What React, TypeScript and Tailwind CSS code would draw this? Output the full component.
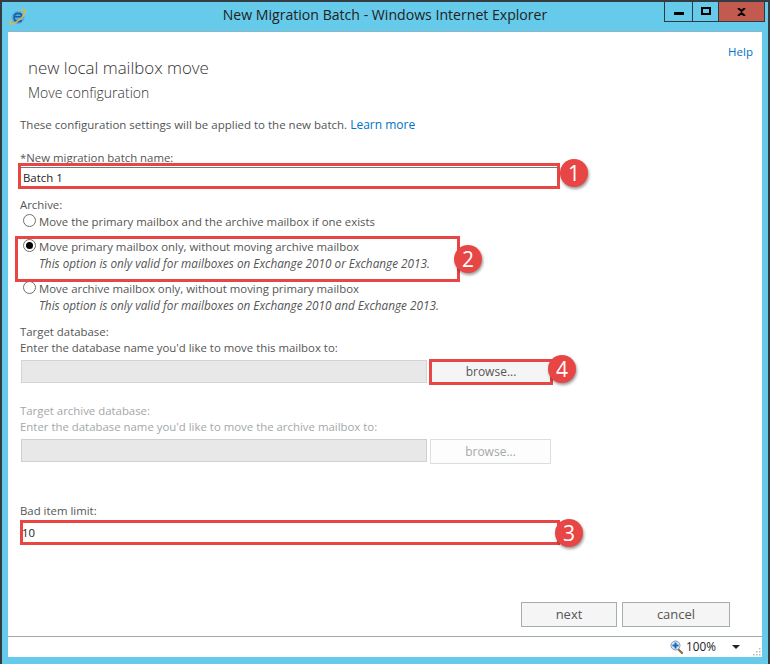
import React from 'react';

function IeIcon() {
  return (
    <svg width="18" height="18" viewBox="0 0 18 18" fill="none">
      <circle cx="9" cy="9.500" r="6.500" fill="#5aa9e6" />
      <path d="M5.500 8.700h7.200c0-2-1.500-3.300-3.500-3.300-2.400 0-4.100 1.800-4.100 4.200 0 2.500 1.700 4.100 4.200 4.100 1.500 0 2.700-.5 3.400-1.500" stroke="#14619f" strokeWidth="1.600" />
      <path d="M14.500 2c1.700-.8 2.600 0 1.800 2-1.300 3.300-5 7.500-9 10-3 1.900-5.800 2.900-6.300 1.600-.3-.9.500-2.300 1.500-3.500" stroke="#f0b429" strokeWidth="1.300" strokeLinecap="round" />
      <path d="M14.500 2c-1.500-.3-3.500.1-5 .9" stroke="#f0b429" strokeWidth="1" strokeLinecap="round" />
    </svg>
  );
}

function ZoomIcon() {
  return (
    <svg width="13" height="14" viewBox="0 0 13 14" fill="none">
      <path d="M8 9l4 4" stroke="#8a6a4a" strokeWidth="2.200" strokeLinecap="round" />
      <circle cx="5.500" cy="5.500" r="4.500" fill="#dcebf7" stroke="#7d97ad" />
      <path d="M5.500 2.500v6M2.500 5.500h6" stroke="#1668c4" strokeWidth="2" />
    </svg>
  );
}

function ResizeGrip() {
  return (
    <svg width="8" height="8" viewBox="0 0 8 8" fill="#b4b9bc">
      <rect x="6" y="0" width="1.500" height="1.500" />
      <rect x="3" y="3" width="1.500" height="1.500" />
      <rect x="6" y="3" width="1.500" height="1.500" />
      <rect x="0" y="6" width="1.500" height="1.500" />
      <rect x="3" y="6" width="1.500" height="1.500" />
      <rect x="6" y="6" width="1.500" height="1.500" />
    </svg>
  );
}

function WindowButtons() {
  return (
    <div className="flex h-[20px] self-start border border-t-0 border-[#2f3a40]">
      <div className="flex w-[28px] items-center justify-center border-r border-[#2f3a40]">
        <div className="mt-[4px] h-[3px] w-[10px] bg-black" />
      </div>
      <div className="flex w-[26px] items-center justify-center border-r border-[#2f3a40]">
        <div className="mt-[-1px] h-[8px] w-[10px] border-2 border-black" />
      </div>
      <div className="flex w-[45px] items-center justify-center bg-[#c25a50]">
        <svg width="9" height="8" viewBox="0 0 9 8">
          <path d="M1 0l3.500 3L8 0M1 8l3.500-3L8 8" stroke="#000" strokeWidth="2" fill="none" />
        </svg>
      </div>
    </div>
  );
}

function Badge({ n, className }: { n: number; className: string }) {
  return (
    <div
      className={`absolute flex h-[28px] w-[28px] items-center justify-center rounded-full bg-[#e84545] text-[21px] font-normal not-italic leading-none text-white shadow-[1px_2px_3px_rgba(0,0,0,0.4)] ${className}`}
    >
      {n}
    </div>
  );
}

function RadioDot({ checked }: { checked?: boolean }) {
  return (
    <div className="mt-[1px] flex h-[13px] w-[13px] shrink-0 items-center justify-center rounded-full border border-[#6f6f6f] bg-white">
      {checked && <div className="h-[7px] w-[7px] rounded-full bg-black" />}
    </div>
  );
}

function RadioOption({ label, note, checked }: { label: string; note?: string; checked?: boolean }) {
  return (
    <div className="flex gap-[3px] pl-[3px]">
      <RadioDot checked={checked} />
      <div>
        <div className="h-[17px] leading-[17px]">{label}</div>
        {note && <div className="h-[17px] text-[11.75px] italic leading-[17px]">{note}</div>}
      </div>
    </div>
  );
}

export default function App() {
  return (
    <div className="flex h-[664px] w-[770px] flex-col overflow-hidden border-x-2 border-t-2 border-x-[#333c42] border-t-[#333c42] bg-[#66cbea] font-['Open_Sans',sans-serif] text-[11.4px] text-[#555]">
      {/* Title bar */}
      <div className="relative flex h-[29px] shrink-0 items-start justify-between pl-[7px] pr-[3px]">
        <div className="pt-[6px]"><IeIcon /></div>
        <div className="absolute inset-x-0 top-[3px] text-center text-[14.1px] leading-[20px] text-[#222]">
          New Migration Batch - Windows Internet Explorer
        </div>
        <div className="relative"><WindowButtons /></div>
      </div>

      {/* Page */}
      <div className="mx-[6px] flex h-[605px] shrink-0 flex-col border-t border-[#8fb5c6] bg-white pl-[12px]">
        <div className="mr-[9px] mt-[12px] text-right text-[11.5px] leading-[16px] text-[#0072c6]">Help</div>
        <div className="ml-[8px] mt-[-4px] text-[16.9px] font-light leading-[24px] text-[#333]">new local mailbox move</div>
        <div className="ml-[8px] mt-[1px] text-[14px] font-light leading-[24px] text-[#333]">Move configuration</div>

        <div className="mt-[12px] text-[11.5px] leading-[16px]">
          These configuration settings will be applied to the new batch. <span className="text-[12px] text-[#0072c6]">Learn more</span>
        </div>

        <div className="mt-[17px] leading-[16px]">*New migration batch name:</div>
        <div className="relative mt-[1px] flex h-[21px] w-[538px] items-center border-t border-[#777] pl-[3px] text-[#222]">
          Batch 1
          <div className="absolute inset-x-[-2px] bottom-[-1px] top-[-5px] border-[3px] border-[#e84545]" />
          <Badge n={1} className="left-[540px] top-[-9px]" />
        </div>

        <div className="mt-[9px] leading-[16px]">Archive:</div>
        <div className="mt-[0px]"><RadioOption label="Move the primary mailbox and the archive mailbox if one exists" /></div>
        <div className="relative mt-[8px]">
          <RadioOption
            checked
            label="Move primary mailbox only, without moving archive mailbox"
            note="This option is only valid for mailboxes on Exchange 2010 or Exchange 2013."
          />
          <div className="absolute left-[-5px] top-[-2px] h-[46px] w-[445px] border-[3px] border-[#e84545]" />
          <Badge n={2} className="left-[434px] top-[7px]" />
        </div>
        <div className="mt-[8px]">
          <RadioOption
            label="Move archive mailbox only, without moving primary mailbox"
            note="This option is only valid for mailboxes on Exchange 2010 and Exchange 2013."
          />
        </div>

        <div className="mt-[10px] leading-[16px]">Target database:</div>
        <div className="leading-[16px]">Enter the database name you'd like to move this mailbox to:</div>
        <div className="mt-[4px] flex gap-[3px]">
          <div className="ml-[1px] h-[23px] w-[406px] border border-[#d4d4d4] bg-[#e8e8e8]" />
          <div className="relative ml-[1px] flex h-[23px] w-[120px] items-center justify-center bg-[#f5f5f5] text-[12px] text-[#555]">
            browse...
            <div className="absolute inset-x-[-2px] bottom-[-2px] top-[-1px] border-[3px] border-[#e84545]" />
            <Badge n={4} className="left-[117px] top-[-5px]" />
          </div>
        </div>

        <div className="mt-[20px] leading-[16px] text-[#a3a8aa]">Target archive database:</div>
        <div className="leading-[16px] text-[#a3a8aa]">Enter the database name you'd like to move the archive mailbox to:</div>
        <div className="mt-[4px] flex gap-[3px]">
          <div className="ml-[1px] h-[23px] w-[406px] border border-[#cfcfcf] bg-[#e8e8e8]" />
          <div className="flex h-[25px] w-[121px] items-center justify-center border border-[#dedede] bg-[#fdfdfd] text-[12px] text-[#a3a8aa]">browse...</div>
        </div>

        <div className="mt-[39px] leading-[16px]">Bad item limit:</div>
        <div className="relative mt-[3px] flex h-[22px] w-[537px] items-center border-b border-[#666] pl-[2px] text-[#222]">
          10
          <div className="absolute bottom-[-2px] left-0 right-[-3px] top-[-2px] border-[3px] border-[#e84545]" />
          <Badge n={3} className="left-[535px] top-[-3px]" />
        </div>

        <div className="mr-[32px] mt-[58px] flex justify-end gap-[5px] text-[13px]">
          <div className="flex h-[25px] w-[96px] items-center justify-center border border-[#a4adb0] bg-[#f5f5f5]">next</div>
          <div className="flex h-[25px] w-[108px] items-center justify-center border border-[#a4adb0] bg-[#f5f5f5]">cancel</div>
        </div>
      </div>

      {/* Status bar */}
      <div className="mx-[6px] flex h-[21px] shrink-0 items-center justify-end border-t border-[#a0a8ac] bg-white pr-[1px] text-[#222]">
        <ZoomIcon />
        <span className="ml-[3px] mr-[16px] text-[11.8px]">100%</span>
        <div className="h-0 w-0 border-x-[4px] border-t-[4px] border-x-transparent border-t-[#222]" />
        <div className="ml-[13px] self-end pb-[1px]"><ResizeGrip /></div>
      </div>
    </div>
  );
}
